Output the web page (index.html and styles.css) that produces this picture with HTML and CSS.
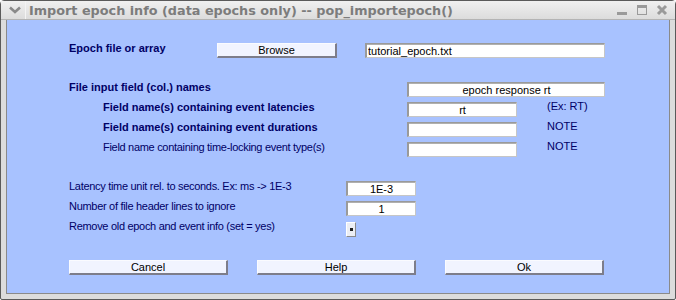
FILE: index.html
```html
<!doctype html>
<html lang="en">
  <head>
    <meta charset="UTF-8" />
    <title>pop_importepoch()</title>
    <link rel="stylesheet" href="styles.css">
  </head>
  <body>
    <div class="window">
      <div class="titlebar">
        <span class="menu-btn">
          <svg width="12" height="8" viewBox="0 0 12 8"><path d="M1 1.5 L6 6 L11 1.5" fill="none" stroke="#8a8a8a" stroke-width="2.6"/></svg>
        </span>
        <span class="title">Import epoch info (data epochs only) -- pop_importepoch()</span>
        <span class="win-btns">
          <svg width="12" height="12" viewBox="0 0 12 12"><rect x="1" y="8" width="10" height="3" fill="#9a9a9a"/></svg>
          <svg width="12" height="12" viewBox="0 0 12 12"><rect x="1.5" y="1.5" width="9" height="9" fill="none" stroke="#9a9a9a"/><rect x="1" y="1" width="10" height="3" fill="#9a9a9a"/></svg>
          <svg width="12" height="12" viewBox="0 0 12 12"><path d="M2 2 L10 10 M10 2 L2 10" stroke="#9a9a9a" stroke-width="3"/></svg>
        </span>
      </div>

      <div class="content">
        <div class="row first">
          <div class="label bold w148">Epoch file or array</div>
          <button class="btn browse">Browse</button>
          <input class="edit file" type="text" value="tutorial_epoch.txt" aria-label="Epoch file" />
        </div>

        <div class="row gap">
          <div class="label bold w338">File input field (col.) names</div>
          <input class="edit names center" type="text" value="epoch response rt" aria-label="Field names" />
        </div>
        <div class="row">
          <div class="label bold indent w304">Field name(s) containing event latencies</div>
          <input class="edit small center" type="text" value="rt" aria-label="Latencies" />
          <div class="hint">(Ex: RT)</div>
        </div>
        <div class="row">
          <div class="label bold indent w304">Field name(s) containing event durations</div>
          <input class="edit small center" type="text" value="" aria-label="Durations" />
          <div class="hint">NOTE</div>
        </div>
        <div class="row">
          <div class="label indent w304">Field name containing time-locking event type(s)</div>
          <input class="edit small center" type="text" value="" aria-label="Event type" />
          <div class="hint">NOTE</div>
        </div>

        <div class="row gap">
          <div class="label w276">Latency time unit rel. to seconds. Ex: ms -&gt; 1E-3</div>
          <input class="edit unit center" type="text" value="1E-3" aria-label="Time unit" />
        </div>
        <div class="row">
          <div class="label w276">Number of file header lines to ignore</div>
          <input class="edit unit center" type="text" value="1" aria-label="Header lines" />
        </div>
        <div class="row">
          <div class="label w276">Remove old epoch and event info (set = yes)</div>
          <span class="check"><span class="dot"></span></span>
        </div>

        <div class="row gap buttons">
          <button class="btn wide">Cancel</button>
          <button class="btn wide">Help</button>
          <button class="btn wide">Ok</button>
        </div>
      </div>
    </div>
  </body>
</html>
```

FILE: styles.css
```css
body {
  margin: 0;
  font-family: 'Liberation Sans', Arial, sans-serif;
}
.window {
  width: 676px;
  height: 300px;
  box-sizing: border-box;
  background: #dcdcdc;
  border: 1px solid #5a5a5a;
  border-radius: 4px 4px 2px 2px;
  padding: 0 5px 5px 5px;
  display: flex;
  flex-direction: column;
}
.titlebar {
  height: 18px;
  margin: 0 -5px;
  padding: 0 6px 0 6px;
  display: flex;
  align-items: center;
  background: linear-gradient(#f0f0f0, #dcdcdc);
  border-bottom: 1px solid #b4b4b4;
}
.menu-btn {
  width: 15px;
  display: flex;
  justify-content: center;
  padding-right: 3px;
  border-right: 1px solid #f4f4f4;
  height: 18px;
  align-items: center;
}
.title {
  margin-left: 3px;
  font-family: 'DejaVu Sans', sans-serif;
  font-weight: bold;
  font-size: 12.8px;
  color: #7c7c7c;
  flex: 1;
}
.win-btns {
  display: flex;
  gap: 8px;
  margin-right: 1px;
}
.content {
  flex: 1;
  background: #a8c2ff;
  border: 1px solid #8a8a8a;
  border-top: none;
  padding-left: 62px;
  font-size: 11px;
  color: #000066;
}
.row {
  display: flex;
  height: 15px;
  margin-top: 5px;
}
.row.first {
  margin-top: 23px;
}
.row.gap {
  margin-top: 24px;
}
.label {
  margin-top: -2px;
  line-height: 15px;
  white-space: nowrap;
  letter-spacing: -0.3px;
}
.bold {
  font-weight: bold;
  font-family: 'Liberation Sans Narrow', 'Liberation Sans', sans-serif;
  letter-spacing: 0;
}
.indent {
  padding-left: 34px;
}
.w148 { width: 148px; }
.w338 { width: 338px; }
.w304 { width: 304px; }
.w276 { width: 277px; }
.btn {
  height: 15px;
  box-sizing: border-box;
  padding: 0;
  font: 11px 'Liberation Sans Narrow', 'Liberation Sans', sans-serif;
  color: #000;
  background: #f1f4ff;
  border: 1px solid;
  border-color: #fafbff #7d7d8a #7d7d8a #fafbff;
  border-width: 1px 2px 2px 1px;
}
.browse {
  width: 120px;
}
.edit {
  height: 15px;
  box-sizing: border-box;
  padding: 0 1px;
  font: 11px/12px 'Liberation Sans', sans-serif;
  color: #000;
  background: #fff;
  border-style: solid;
  border-width: 1px 1px 1px 2px;
  border-color: #9a9a9a #c6c6c6 #c6c6c6 #9a9a9a;
  box-shadow: inset 0 1px 0 #b0b0b0;
  outline: none;
}
.center {
  text-align: center;
}
.file {
  width: 240px;
  margin-left: 28px;
}
.names {
  width: 198px;
}
.small {
  width: 110px;
}
.unit {
  width: 70px;
}
.hint {
  margin-left: 30px;
  margin-top: -3px;
  line-height: 15px;
}
.check {
  width: 8px;
  height: 13px;
  margin-top: 1px;
  background: #eceef4;
  border: 1px solid;
  border-color: #fff #8a8a8a #8a8a8a #fff;
  display: flex;
  align-items: center;
  justify-content: center;
}
.dot {
  width: 3px;
  height: 3px;
  background: #202020;
}
.buttons {
  gap: 29px;
}
.wide {
  width: 159px;
}
```
